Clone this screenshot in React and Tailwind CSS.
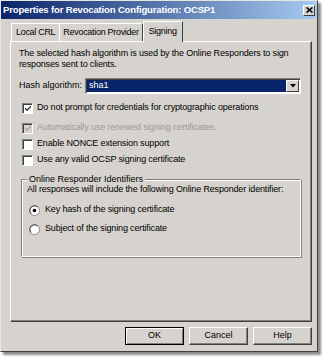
import React from "react";

function Check({ checked, disabled }) {
  return (
    <div
      className={`w-[11px] h-[11px] border border-t-[#808080] border-l-[#808080] border-r-white border-b-white shadow-[inset_1px_1px_0_#404040] flex items-center justify-center ${
        disabled ? "bg-[#d6d3ce]" : "bg-white"
      }`}
    >
      {checked && (
        <svg width="8" height="8" viewBox="0 0 8 8">
          <path d="M1 3.5 L3 5.5 L7 1.5 L7 3 L3 7 L1 5 Z" fill={disabled ? "#9a9a9a" : "#000"} />
        </svg>
      )}
    </div>
  );
}

function Radio({ checked }) {
  return (
    <svg width="11" height="11" viewBox="0 0 12 12">
      <circle cx="6" cy="6" r="5.5" fill="#fff" stroke="#808080" strokeWidth="1" />
      <path d="M2 9 A5 5 0 0 1 9 2" fill="none" stroke="#404040" strokeWidth="1" />
      {checked && <circle cx="6" cy="6" r="2" fill="#000" />}
    </svg>
  );
}

function Btn({ children, def }) {
  return (
    <div
      className={`w-[59px] h-[18px] flex items-center justify-center text-[9px] bg-[#d6d3ce] border ${
        def
          ? "border-black shadow-[inset_1px_1px_0_#fff,inset_-1px_-1px_0_#808080]"
          : "border-t-white border-l-white border-r-[#404040] border-b-[#404040] shadow-[inset_-1px_-1px_0_#808080]"
      }`}
    >
      {children}
    </div>
  );
}

export default function App() {
  return (
    <div className="w-[326px] h-[360px] bg-white font-['Liberation_Sans',Arial,sans-serif] text-black">
      <div className="w-[318px] h-[352px] bg-[#d6d3ce] border border-t-[#e8e6e2] border-l-[#e8e6e2] border-r-[#404040] border-b-[#404040] shadow-[3px_3px_2px_rgba(0,0,0,0.45)] flex flex-col">
        {/* Title bar */}
        <div className="h-[18px] flex items-center justify-between pl-[2px] pr-[2px] bg-[linear-gradient(to_right,#0a246a,#a6caf0)]">
          <span className="text-white font-bold text-[9.5px] tracking-[-0.15px]">
            Properties for Revocation Configuration: OCSP1
          </span>
          <div className="w-[12px] h-[11px] bg-[#d6d3ce] border border-t-white border-l-white border-r-[#404040] border-b-[#404040] flex items-center justify-center">
            <svg width="7" height="6" viewBox="0 0 7 6">
              <path d="M0.5 0.5 L6.5 5.5 M6.5 0.5 L0.5 5.5" stroke="#000" strokeWidth="1.6" />
            </svg>
          </div>
        </div>

        {/* Tabs */}
        <div className="flex items-end ml-[10px] mt-[2px] h-[20px] text-[9px] tracking-[-0.3px]">
          <div className="h-[18px] px-[4px] flex items-center border-t border-l border-t-white border-l-white">
            Local CRL
          </div>
          <div className="h-[18px] px-[3px] flex items-center border-t border-l border-r border-t-white border-l-white border-r-[#404040]">
            Revocation Provider
          </div>
          <div className="h-[21px] -mb-[1px] px-[5px] flex items-center bg-[#d6d3ce] border-t border-l border-r border-t-white border-l-white border-r-[#404040] relative z-10">
            Signing
          </div>
        </div>

        {/* Panel */}
        <div className="ml-[9px] w-[302px] h-[281px] border border-t-white border-l-white border-r-[#404040] border-b-[#404040] shadow-[inset_-1px_-1px_0_#808080] px-[8px] pt-[6px] text-[9px]">
          <div className="leading-[11px] tracking-[-0.15px]">
            <div>The selected hash algorithm is used by the Online Responders to sign</div>
            <div>responses sent to clients.</div>
          </div>

          <div className="flex items-center h-[16px] mt-[8px]">
            <div className="w-[66px]">Hash algorithm:</div>
            <div className="w-[216px] h-[16px] bg-white border border-t-[#808080] border-l-[#808080] border-r-white border-b-white shadow-[inset_1px_1px_0_#404040] flex items-stretch p-[1px]">
              <div className="flex-1 bg-[#0a246a] text-white flex items-center pl-[2px] text-[9px]">sha1</div>
              <div className="w-[13px] bg-[#d6d3ce] border border-t-white border-l-white border-r-[#404040] border-b-[#404040] flex items-center justify-center">
                <svg width="6" height="4" viewBox="0 0 6 4">
                  <path d="M0 0 H6 L3 3.5 Z" fill="#000" />
                </svg>
              </div>
            </div>
          </div>

          <div className="flex items-center h-[16px] mt-[6px] ml-[3px] gap-[4px]">
            <Check checked />
            <span className="tracking-[-0.15px]">Do not prompt for credentials for cryptographic operations</span>
          </div>
          <div className="flex items-center h-[16px] mt-[4px] ml-[3px] gap-[4px]">
            <Check checked disabled />
            <span className="tracking-[-0.15px] text-[#9a9a9a]">Automatically use renewed signing certificates.</span>
          </div>
          <div className="flex items-center h-[16px] ml-[3px] gap-[4px]">
            <Check />
            <span className="tracking-[-0.15px]">Enable NONCE extension support</span>
          </div>
          <div className="flex items-center h-[16px] ml-[3px] gap-[4px]">
            <Check />
            <span className="tracking-[-0.15px]">Use any valid OCSP signing certificate</span>
          </div>

          {/* Group box */}
          <div className="mt-[11px] ml-[2px] w-[280px] h-[78px] border border-t-[#808080] border-l-[#808080] border-r-white border-b-white shadow-[inset_1px_1px_0_#fff,1px_1px_0_#808080] relative pl-[5px] pt-[4px]">
            <div className="absolute -top-[7px] left-[5px] px-[2px] bg-[#d6d3ce] leading-[12px]">
              Online Responder Identifiers
            </div>
            <div className="leading-[11px] tracking-[-0.15px]">
              All responses will include the following Online Responder identifier:
            </div>
            <div className="flex items-center h-[16px] mt-[7px] ml-[2px] gap-[5px]">
              <Radio checked />
              <span className="tracking-[-0.15px]">Key hash of the signing certificate</span>
            </div>
            <div className="flex items-center h-[16px] mt-[3px] ml-[2px] gap-[5px]">
              <Radio />
              <span className="tracking-[-0.15px]">Subject of the signing certificate</span>
            </div>
          </div>
        </div>

        {/* Buttons */}
        <div className="flex justify-end gap-[5px] mr-[5px] mt-[5px]">
          <Btn def>OK</Btn>
          <Btn>Cancel</Btn>
          <Btn>Help</Btn>
        </div>
      </div>
    </div>
  );
}
